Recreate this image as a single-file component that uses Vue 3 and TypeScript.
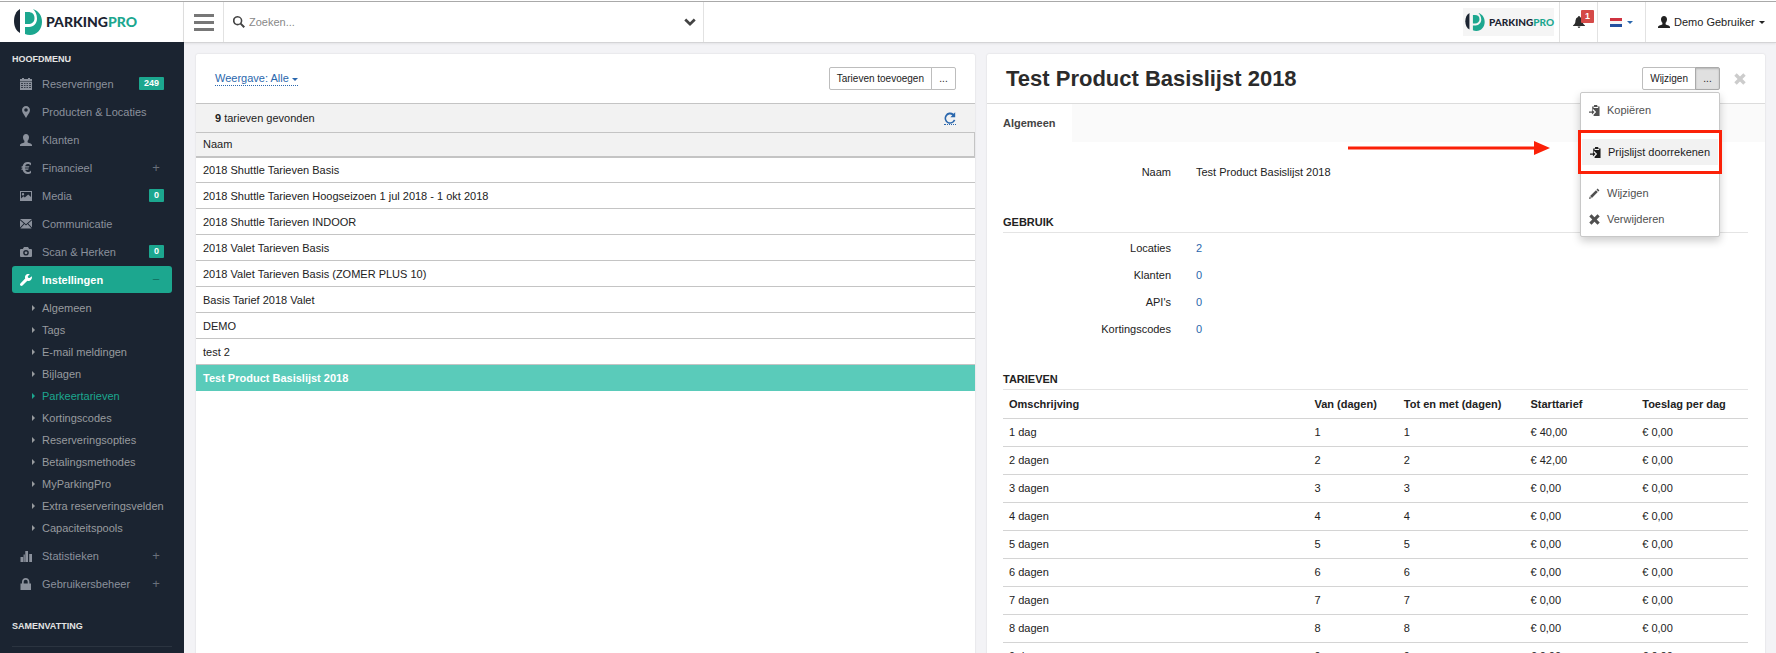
<script setup lang="ts">
import { ref } from 'vue'

interface MenuItem {
  label: string
  icon: string
  badge?: string
  toggle?: string
  active?: boolean
  children?: string[]
}

const icons: Record<string, string> = {
  calendar:
    'M0 1H2V0H4V1H8V0H10V1H12V3H0ZM0 3.600H12V12H0ZM1 5V5.700H3V5ZM4 5V5.700H5.500V5ZM6.500 5V5.700H8V5ZM9 5V5.700H11V5ZM1 7V7.700H3V7ZM4 7V7.700H5.500V7ZM6.500 7V7.700H8V7ZM9 7V7.700H11V7ZM1 9V9.700H3V9ZM4 9V9.700H5.500V9ZM6.500 9V9.700H8V9ZM9 9V9.700H11V9Z',
  pin: 'M6 0C3.8 0 2 1.8 2 4C2 6.8 4.3 8.6 6 12C7.7 8.6 10 6.8 10 4C10 1.8 8.2 0 6 0ZM6 2.2A1.8 1.8 0 1 1 6 5.8A1.8 1.8 0 1 1 6 2.2Z',
  user: 'M6 0C4.2 0 3 1.3 3 3.2C3 4.8 3.6 6 4.4 6.8V8.2C4.4 8.8 0 9.2 0 11V12H12V11C12 9.2 7.6 8.8 7.6 8.2V6.8C8.4 6 9 4.8 9 3.2C9 1.3 7.8 0 6 0Z',
  euro: 'M11 1V3.6C10 2.6 9 2.1 7.8 2.1C6.4 2.1 5.6 2.9 5.2 4.2H9.4L8.8 5.4H4.9V6.6H8.8L8.2 7.8H5.2C5.6 9.2 6.5 9.9 7.8 9.9C9 9.9 10 9.4 11 8.4V11C10 11.7 9 12 7.6 12C5 12 3.2 10.4 2.6 7.8H1.2L1.8 6.6H2.4V5.4H1.2L1.8 4.2H2.6C3.2 1.6 5 0 7.6 0C9 0 10 .3 11 1Z',
  picture:
    'M0 1H12V11H0ZM1 2V8.5L3.4 6.2L4.8 7.4L8.2 4.4L11 7V2ZM3 3A1.2 1.2 0 1 1 3 5.4A1.2 1.2 0 1 1 3 3Z',
  mail: 'M0 1H12L6 6.2ZM0 2.2L3.8 5.5L0 9.4ZM12 2.2V9.4L8.2 5.5ZM4.5 6.1L6 7.4L7.5 6.1L11.6 10.4H.4Z',
  camera:
    'M4 1H8L9.2 3H11Q12 3 12 4V10Q12 11 11 11H1Q0 11 0 10V4Q0 3 1 3H2.8ZM6 4A2.8 2.8 0 1 0 6 9.6A2.8 2.8 0 1 0 6 4ZM6 5.4A1.4 1.4 0 1 1 6 8.2A1.4 1.4 0 1 1 6 5.4Z',
  wrench:
    'M11.7 2.2L9.7 4.1L8 3.8L7.8 2.2L9.8.3C8.200-.3 6.500.100 5.600 1.300C4.900 2.300 4.800 3.500 5.200 4.600L.4 9.400C-.2 10-.1 10.900.4 11.500C1 12.100 1.900 12.100 2.500 11.500L7.300 6.700C8.500 7.200 9.900 7 10.900 6C11.900 5 12.300 3.500 11.700 2.200Z',
  stats: 'M.5 7H3.200V12H.5ZM3.600 4.500H4.800V12H3.600ZM5.300 1H8V12H5.300ZM9.200 4H12V12H9.200Z',
  lock: 'M0.500 5.500H2V4C2 1.600 3.600 0 5.700 0C7.800 0 9.400 1.600 9.400 4V5.500H11V12H.5ZM3.700 5.500H7.700V4C7.700 2.600 6.900 1.800 5.700 1.800C4.500 1.800 3.700 2.600 3.700 4Z',
  copy: 'M3.500 1.500H5.500V0H9V1.500H11.500V12H5V10.500L7.800 7.600L4.200 4V5.500H3.500ZM5 2.200V3.400H10V2.200ZM0 7H3.200V5.200L6 7.700L3.200 10.300V8.500H0Z',
  pencil: 'M9.400 .6L11.400 2.600L10.200 3.800L8.200 1.800ZM7.600 2.400L9.600 4.400L3.200 10.800L1.200 8.800ZM.8 9.400L2.600 11.200L0 12Z',
  cross: 'M2.700 .3L6 3.600L9.300.3L11.700 2.700L8.400 6L11.700 9.300L9.300 11.700L6 8.400L2.700 11.700L.3 9.300L3.600 6L.3 2.700Z',
  bell: 'M6 0Q7 0 7 1Q9.300 1.700 9.500 4.500C9.600 7 10.200 8.200 12 9.500V10H0V9.500C1.800 8.200 2.400 7 2.500 4.500Q2.700 1.700 5 1Q5 0 6 0ZM4.600 10.600H7.400Q7.200 12 6 12Q4.800 12 4.600 10.600Z',
  search:
    'M4.700 0A4.700 4.700 0 0 1 8.600 7.200L12 10.400L10.500 12L7.200 8.600A4.700 4.700 0 1 1 4.700 0ZM4.700 1.600A3.100 3.100 0 1 0 4.700 7.800A3.100 3.100 0 1 0 4.700 1.600Z',
  chevron: 'M2.200 2.500L6 6.200L9.800 2.500L11.700 4.400L6 10L.3 4.400Z',
  refresh:
    'M9.600 1.700L11.200 .2V5.200H6.400L8.300 3.200A3.900 3.900 0 1 0 9.700 7.700L11.400 8.100A5.600 5.600 0 1 1 9.600 1.700Z',
}

const menu: MenuItem[] = [
  { label: 'Reserveringen', icon: 'calendar', badge: '249' },
  { label: 'Producten & Locaties', icon: 'pin' },
  { label: 'Klanten', icon: 'user' },
  { label: 'Financieel', icon: 'euro', toggle: '+' },
  { label: 'Media', icon: 'picture', badge: '0' },
  { label: 'Communicatie', icon: 'mail' },
  { label: 'Scan & Herken', icon: 'camera', badge: '0' },
  {
    label: 'Instellingen',
    icon: 'wrench',
    toggle: '−',
    active: true,
    children: [
      'Algemeen',
      'Tags',
      'E-mail meldingen',
      'Bijlagen',
      'Parkeertarieven',
      'Kortingscodes',
      'Reserveringsopties',
      'Betalingsmethodes',
      'MyParkingPro',
      'Extra reserveringsvelden',
      'Capaciteitspools',
    ],
  },
  { label: 'Statistieken', icon: 'stats', toggle: '+' },
  { label: 'Gebruikersbeheer', icon: 'lock', toggle: '+' },
]
const currentChild = 'Parkeertarieven'

const rates = [
  '2018 Shuttle Tarieven Basis',
  '2018 Shuttle Tarieven Hoogseizoen 1 jul 2018 - 1 okt 2018',
  '2018 Shuttle Tarieven INDOOR',
  '2018 Valet Tarieven Basis',
  '2018 Valet Tarieven Basis (ZOMER PLUS 10)',
  'Basis Tarief 2018 Valet',
  'DEMO',
  'test 2',
  'Test Product Basislijst 2018',
]
const selected = ref('Test Product Basislijst 2018')
const query = ref('')

const usage = [
  { label: 'Locaties', count: 2 },
  { label: 'Klanten', count: 0 },
  { label: "API's", count: 0 },
  { label: 'Kortingscodes', count: 0 },
]

const tariffs = Array.from({ length: 9 }, (_, i) => ({
  name: i === 0 ? '1 dag' : `${i + 1} dagen`,
  day: i + 1,
  start: i === 0 ? '€ 40,00' : i === 1 ? '€ 42,00' : '€ 0,00',
  extra: '€ 0,00',
}))
</script>

<template>
  <div class="app">
    <aside class="sidebar">
      <a href="#" class="brand" aria-label="ParkingPro">
        <svg class="mark" viewBox="0 0 28 26">
          <path fill="#1b2431" d="M6 0C-2 4-2 20 6 24Z" />
          <path fill="#1ca78f" d="M19 0C25 2 28 7 28 13C28 20 23 26 16 26Q13 26 11 25V18H15C20 18 23 14 23 9.500C23 5 21 2 19 0ZM11 3H14C18 3 20.500 5 20.500 9C20.500 13 18 15 14 15H11Z" />
        </svg>
        <span class="wordmark">PARKING<b>PRO</b></span>
      </a>
      <nav class="nav">
        <h2>HOOFDMENU</h2>
        <ul class="menu">
          <li v-for="item in menu" :key="item.label">
            <a href="#" class="item" :class="{ active: item.active }">
              <svg class="icon" viewBox="0 0 12 12"><path fill-rule="evenodd" :d="icons[item.icon]" /></svg>
              <span class="label">{{ item.label }}</span>
              <span v-if="item.badge" class="badge">{{ item.badge }}</span>
              <span v-if="item.toggle" class="toggle">{{ item.toggle }}</span>
            </a>
            <ul v-if="item.children" class="submenu">
              <li v-for="child in item.children" :key="child">
                <a href="#" :class="{ current: child === currentChild }">{{ child }}</a>
              </li>
            </ul>
          </li>
        </ul>
        <h2 class="summary">SAMENVATTING</h2>
      </nav>
    </aside>

    <div class="page">
      <header class="topbar">
        <button class="burger" aria-label="Menu"><i></i><i></i><i></i></button>
        <label class="search">
          <svg class="icon" viewBox="0 0 12 12"><path fill-rule="evenodd" :d="icons.search" /></svg>
          <input v-model="query" type="text" placeholder="Zoeken..." aria-label="Zoeken" />
          <svg class="icon" viewBox="0 0 12 12"><path :d="icons.chevron" /></svg>
        </label>
        <a href="#" class="account-logo" aria-label="ParkingPro">
          <svg class="mark" viewBox="0 0 28 26">
            <path fill="#1b2431" d="M6 0C-2 4-2 20 6 24Z" />
            <path fill="#1ca78f" d="M19 0C25 2 28 7 28 13C28 20 23 26 16 26Q13 26 11 25V18H15C20 18 23 14 23 9.500C23 5 21 2 19 0ZM11 3H14C18 3 20.500 5 20.500 9C20.500 13 18 15 14 15H11Z" />
          </svg>
          <span class="wordmark">PARKING<b>PRO</b></span>
        </a>
        <button class="cell bell" aria-label="Meldingen">
          <svg class="icon" viewBox="0 0 12 12"><path :d="icons.bell" /></svg>
          <span class="count">1</span>
        </button>
        <button class="cell lang" aria-label="Taal">
          <span class="flag"></span><span class="caret"></span>
        </button>
        <button class="cell account">
          <svg class="icon" viewBox="0 0 12 12"><path :d="icons.user" /></svg>
          Demo Gebruiker<span class="caret"></span>
        </button>
      </header>

      <main class="panels">
        <section class="panel list">
          <div class="panel-head">
            <a href="#" class="view">Weergave: Alle <span class="caret"></span></a>
            <div class="group">
              <button>Tarieven toevoegen</button><button>...</button>
            </div>
          </div>
          <div class="found">
            <span><b>9</b> tarieven gevonden</span>
            <a href="#" class="refresh" aria-label="Vernieuwen">
              <svg class="icon" viewBox="0 0 12 12"><path :d="icons.refresh" /></svg>
            </a>
          </div>
          <table class="rates">
            <thead>
              <tr><th>Naam</th></tr>
            </thead>
            <tbody>
              <tr v-for="r in rates" :key="r" :class="{ selected: r === selected }" @click="selected = r">
                <td>{{ r }}</td>
              </tr>
            </tbody>
          </table>
        </section>

        <section class="panel detail">
          <div class="panel-head">
            <h1>Test Product Basislijst 2018</h1>
            <div class="actions">
              <div class="group">
                <button>Wijzigen</button><button class="pressed">...</button>
              </div>
              <button class="close" aria-label="Sluiten">
                <svg class="icon" viewBox="0 0 12 12"><path :d="icons.cross" /></svg>
              </button>
              <div class="dropdown">
                <button><svg class="icon" viewBox="0 0 12 12"><path fill-rule="evenodd" :d="icons.copy" /></svg>Kopiëren</button>
                <div class="highlight">
                  <svg class="arrow" viewBox="0 0 202 14" aria-hidden="true">
                    <path fill="#fb2108" d="M0 5.500H186V0L202 7L186 14V8.500H0Z" />
                  </svg>
                  <button class="hover"><svg class="icon" viewBox="0 0 12 12"><path fill-rule="evenodd" :d="icons.copy" /></svg>Prijslijst doorrekenen</button>
                </div>
                <button><svg class="icon" viewBox="0 0 12 12"><path :d="icons.pencil" /></svg>Wijzigen</button>
                <button><svg class="icon" viewBox="0 0 12 12"><path :d="icons.cross" /></svg>Verwijderen</button>
              </div>
            </div>
          </div>
          <div class="tabs"><a href="#">Algemeen</a></div>
          <div class="content">
            <dl class="fields">
              <dt>Naam</dt>
              <dd>Test Product Basislijst 2018</dd>
            </dl>
            <h3>GEBRUIK</h3>
            <dl class="fields usage">
              <template v-for="u in usage" :key="u.label">
                <dt>{{ u.label }}</dt>
                <dd><a href="#">{{ u.count }}</a></dd>
              </template>
            </dl>
            <h3>TARIEVEN</h3>
            <table class="tariffs">
              <colgroup>
                <col /><col class="c-from" /><col class="c-to" /><col class="c-price" /><col class="c-price" />
              </colgroup>
              <thead>
                <tr>
                  <th>Omschrijving</th>
                  <th>Van (dagen)</th>
                  <th>Tot en met (dagen)</th>
                  <th>Starttarief</th>
                  <th>Toeslag per dag</th>
                </tr>
              </thead>
              <tbody>
                <tr v-for="t in tariffs" :key="t.day">
                  <td>{{ t.name }}</td>
                  <td>{{ t.day }}</td>
                  <td>{{ t.day }}</td>
                  <td>{{ t.start }}</td>
                  <td>{{ t.extra }}</td>
                </tr>
              </tbody>
            </table>
          </div>
        </section>
      </main>
    </div>
  </div>
</template>

<style>
body {
  margin: 0;
}
</style>

<style scoped>
.app,
.app * {
  box-sizing: border-box;
}
.app {
  display: grid;
  grid-template-columns: 184px minmax(0, 1fr);
  height: 100vh;
  overflow: hidden;
  padding-top: 1px;
  background: #fff;
  color: #222;
  font: 11px/16px 'Liberation Sans', Arial, sans-serif;
}
a {
  color: #2a67ad;
  text-decoration: none;
}
ul,
dl,
dd,
h1,
h2,
h3 {
  margin: 0;
  padding: 0;
  list-style: none;
}
button {
  margin: 0;
  padding: 0;
  border: 0;
  background: none;
  color: inherit;
  font: inherit;
}
.icon {
  width: 12px;
  height: 12px;
  flex: none;
  fill: currentColor;
}
.caret {
  display: inline-block;
  border: 3px solid transparent;
  border-top-color: currentColor;
  border-bottom: 0;
  vertical-align: middle;
}

/* sidebar */
.sidebar {
  display: flex;
  flex-direction: column;
  min-height: 0;
  border-top: 1px solid #a9a9a9;
}
.brand {
  display: flex;
  align-items: center;
  gap: 4px;
  height: 40px;
  padding-left: 14px;
  flex: none;
  border-right: 1px solid #e2e2e2;
}
.brand .mark {
  width: 28px;
  height: 26px;
}
.wordmark {
  color: #1b2431;
  font: 900 14px/16px Lato, sans-serif;
}
.wordmark b {
  color: #1ca78f;
  font-weight: 900;
}
.nav {
  flex: 1;
  min-height: 0;
  padding: 9px 12px 0;
  background: #1b2431;
}
.nav h2 {
  color: #e4e4e4;
  font: bold 9px/16px 'Liberation Sans', Arial, sans-serif;
}
.menu {
  margin-top: 3px;
}
.item {
  display: flex;
  align-items: center;
  height: 27px;
  margin-bottom: 1px;
  padding: 0 8px;
  border-radius: 3px;
  color: #8b919c;
}
.item .label {
  margin-left: 10px;
  flex: 1;
  white-space: nowrap;
}
.item.active {
  background: #1ca78f;
  color: #fff;
  font-weight: bold;
}
.badge {
  padding: 0 5px;
  border-radius: 1px;
  background: #1ca78f;
  color: #fff;
  font: bold 9px/13px 'Liberation Sans', Arial, sans-serif;
}
.toggle {
  width: 16px;
  color: #69707b;
  font-size: 13px;
  font-weight: normal;
  text-align: center;
}
.active .toggle {
  color: #127565;
}
.submenu {
  padding: 3px 0;
}
.submenu a {
  display: flex;
  align-items: center;
  height: 22px;
  padding-left: 20px;
  color: #989b9f;
  white-space: nowrap;
}
.submenu a::before {
  content: '';
  margin-right: 7px;
  border: 3px solid transparent;
  border-left-color: currentColor;
  border-right: 0;
}
.submenu .current {
  color: #1ca78f;
}
.nav .summary {
  margin-top: 21px;
  padding-bottom: 12px;
  border-bottom: 1px solid #2b3440;
}

/* top bar */
.page {
  display: flex;
  flex-direction: column;
  min-height: 0;
  background: #f3f3f6;
}
.topbar {
  display: flex;
  align-items: stretch;
  height: 42px;
  flex: none;
  border-top: 1px solid #a9a9a9;
  border-bottom: 1px solid #d4d4d6;
  background: #fff;
  box-shadow: 0 1px 2px #0001;
}
.burger {
  display: flex;
  flex-direction: column;
  justify-content: center;
  gap: 4px;
  width: 40px;
  padding-left: 10px;
  border-right: 1px solid #e2e2e2;
}
.burger i {
  width: 20px;
  height: 3px;
  background: #777;
}
.search {
  display: flex;
  align-items: center;
  width: 480px;
  padding: 0 7px 0 9px;
  border-right: 1px solid #e2e2e2;
  color: #444;
}
.search input {
  flex: 1;
  min-width: 0;
  margin-left: 4px;
  padding: 0;
  border: 0;
  outline: 0;
  background: none;
  color: #333;
  font: 11px/16px 'Liberation Sans', Arial, sans-serif;
}
.search input::placeholder {
  color: #888;
  opacity: 1;
}
.account-logo {
  display: flex;
  align-items: center;
  align-self: center;
  gap: 4px;
  height: 28px;
  margin: 0 5px 0 auto;
  padding-left: 2px;
  background: #f5f5f5;
}
.account-logo .mark {
  width: 20px;
  height: 18px;
}
.account-logo .wordmark {
  font-size: 10px;
}
.cell {
  display: flex;
  align-items: center;
  border-left: 1px solid #e2e2e2;
}
.bell {
  position: relative;
  width: 38px;
  padding-left: 13px;
  color: #2b2b2b;
}
.count {
  position: absolute;
  top: 8px;
  right: 3px;
  width: 13px;
  border-radius: 1px;
  background: #d54a48;
  color: #fff;
  font: bold 9px/13px 'Liberation Sans', Arial, sans-serif;
  text-align: center;
}
.lang {
  width: 48px;
  padding-left: 12px;
  gap: 5px;
  color: #2a67ad;
}
.flag {
  width: 12px;
  height: 9px;
  background: linear-gradient(#cf3340 33%, #f4f4f6 33% 66%, #224f9f 66%);
}
.account {
  gap: 4px;
  width: 131px;
  padding-left: 12px;
  white-space: nowrap;
}

/* panels */
.panels {
  display: grid;
  grid-template-columns: 779fr 778fr;
  gap: 12px;
  flex: 1;
  min-height: 0;
  padding: 11px 11px 0 12px;
}
.panel {
  min-width: 0;
  border-radius: 2px 2px 0 0;
  background: #fff;
  box-shadow: 0 0 2px #0002;
}
.panel-head {
  display: flex;
  align-items: center;
  justify-content: space-between;
  height: 50px;
  padding: 0 19px;
  border-bottom: 1px solid #c4c4c4;
}
.view {
  border-bottom: 1px dotted #2a67ad;
  line-height: 14px;
}
.group {
  display: flex;
}
.group button {
  height: 23px;
  min-width: 25px;
  padding: 0 7px;
  border: 1px solid #bdbdbd;
  font-size: 10px;
}
.group button:first-child {
  border-radius: 2px 0 0 2px;
}
.group button + button {
  margin-left: -1px;
  border-radius: 0 2px 2px 0;
}
.group .pressed {
  border-color: #aaa;
  background: #e0e0e0;
  box-shadow: inset 0 1px 2px #0003;
}
.found {
  display: flex;
  align-items: center;
  justify-content: space-between;
  height: 28px;
  padding: 0 19px;
  background: #f2f2f2;
}
.refresh {
  display: flex;
  border-bottom: 1px dotted #2a67ad;
}
table {
  width: 100%;
  border-collapse: collapse;
}
th,
td {
  text-align: left;
  white-space: nowrap;
}
.rates th {
  height: 24px;
  padding: 0 7px;
  border: 1px solid #c4c4c4;
  border-left: 0;
  border-bottom-width: 2px;
  background: #f2f2f2;
  font-weight: normal;
}
.rates td {
  height: 26px;
  padding: 0 7px;
  border-bottom: 1px solid #c4c4c4;
}
.rates .selected td {
  border-bottom: 0;
  background: #5acbba;
  color: #fff;
  font-weight: bold;
}

/* detail */
.detail .panel-head {
  border-bottom-color: #dcdcdc;
}
h1 {
  color: #2b2b2b;
  font-size: 22px;
  line-height: 28px;
}
.actions {
  position: relative;
  display: flex;
  align-items: center;
  gap: 14px;
}
.close {
  display: flex;
  color: #ccc;
}
.dropdown {
  position: absolute;
  top: 25px;
  right: 26px;
  z-index: 2;
  width: 140px;
  padding: 4px 0;
  border: 1px solid #c8c8c8;
  border-radius: 2px;
  background: #fff;
  box-shadow: 0 4px 8px #0003;
}
.dropdown button {
  display: flex;
  align-items: center;
  gap: 7px;
  width: 100%;
  height: 26px;
  padding: 0 8px;
  color: #505050;
  white-space: nowrap;
}
.dropdown .icon {
  width: 11px;
  height: 11px;
}
.dropdown .hover {
  background: #f2f2f2;
  color: #1c1c1c;
}
.highlight {
  position: relative;
  margin: 7px -3px 6px;
  padding: 6px 1px;
  border: 3px solid #fb2108;
}
.arrow {
  position: absolute;
  top: 50%;
  right: calc(100% + 31px);
  width: 202px;
  height: 14px;
  margin-top: -11px;
}
.tabs {
  display: flex;
  height: 38px;
  background: #fafafa;
}
.tabs a {
  display: flex;
  align-items: center;
  padding: 0 16px;
  background: #fff;
  color: #444;
  font-weight: bold;
}
.content {
  padding: 17px 17px 0 16px;
}
.fields {
  display: grid;
  grid-template-columns: 168px 1fr;
  column-gap: 25px;
  line-height: 27px;
}
.fields dt {
  text-align: right;
}
h3 {
  margin-top: 28px;
  padding-bottom: 2px;
  border-bottom: 1px solid #e4e4e4;
  font-size: 11px;
  line-height: 16px;
}
.usage {
  margin: 2px 0 28px;
}
.tariffs {
  table-layout: fixed;
}
.tariffs .c-from {
  width: 12%;
}
.tariffs .c-to {
  width: 17%;
}
.tariffs .c-price {
  width: 15%;
}
.tariffs th,
.tariffs td {
  height: 28px;
  padding: 0 6px;
  border-bottom: 1px solid #d4d4d4;
}
</style>
